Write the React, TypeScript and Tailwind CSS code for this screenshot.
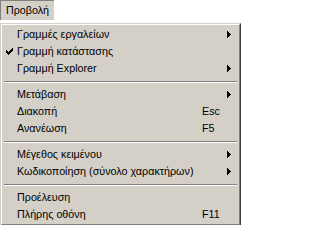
import React from 'react';

type Item =
  | { sep: true }
  | { sep?: false; label: string; checked?: boolean; shortcut?: string; sub?: boolean };

const items: Item[] = [
  { label: 'Γραμμές εργαλείων', sub: true },
  { label: 'Γραμμή κατάστασης', checked: true },
  { label: 'Γραμμή Explorer', sub: true },
  { sep: true },
  { label: 'Μετάβαση', sub: true },
  { label: 'Διακοπή', shortcut: 'Esc' },
  { label: 'Ανανέωση', shortcut: 'F5' },
  { sep: true },
  { label: 'Μέγεθος κειμένου', sub: true },
  { label: 'Κωδικοποίηση (σύνολο χαρακτήρων)', sub: true },
  { sep: true },
  { label: 'Προέλευση' },
  { label: 'Πλήρης οθόνη', shortcut: 'F11' },
];

function Check() {
  return (
    <svg width="7" height="7" viewBox="0 0 7 7" shapeRendering="crispEdges">
      <path d="M6 0h1v1H6zM5 1h2v1H5zM0 2h1v1H0zM4 2h3v1H4zM0 3h2v1H0zM3 3h3v1H3zM0 4h5v1H0zM1 5h3v1H1zM2 6h1v1H2z" fill="#000" />
    </svg>
  );
}

function Arrow() {
  return (
    <svg width="4" height="7" viewBox="0 0 4 7" shapeRendering="crispEdges">
      <path d="M0 0h1v7H0zM1 1h1v5H1zM2 2h1v3H2zM3 3h1v1H3z" fill="#000" />
    </svg>
  );
}

export default function App() {
  return (
    <div className="w-[241px] h-[225px] bg-white overflow-hidden text-[10.75px] leading-none text-black font-['Liberation_Sans',Arial,sans-serif]">
      <div className="h-[23px]">
        <div className="w-[54px] h-[20px] flex items-center justify-center bg-[#d4d0c8] border-t border-l border-[#808080] border-b-white border-r-white">
          Προβολή
        </div>
      </div>
      <div className="w-[241px] border border-t-[#d4d0c8] border-l-[#d4d0c8] border-b-[#404040] border-r-[#404040]">
        <div className="border border-t-white border-l-white border-b-[#808080] border-r-[#808080] bg-[#d4d0c8] p-px">
          {items.map((it, i) =>
            it.sep ? (
              <div key={i} className="h-[9px] flex items-center px-px">
                <div className="w-full border-t border-t-[#808080] border-b border-b-white" />
              </div>
            ) : (
              <div key={i} className="h-[17px] flex items-center">
                <div className="w-[14px] flex items-center pl-[3px]">{it.checked && <Check />}</div>
                <div className="flex-1 whitespace-nowrap">{it.label}</div>
                <div className="w-[37px] flex items-center">
                  {it.shortcut && <span className="pl-px">{it.shortcut}</span>}
                  {it.sub && (
                    <span className="pl-[26px] flex">
                      <Arrow />
                    </span>
                  )}
                </div>
              </div>
            )
          )}
        </div>
      </div>
    </div>
  );
}
